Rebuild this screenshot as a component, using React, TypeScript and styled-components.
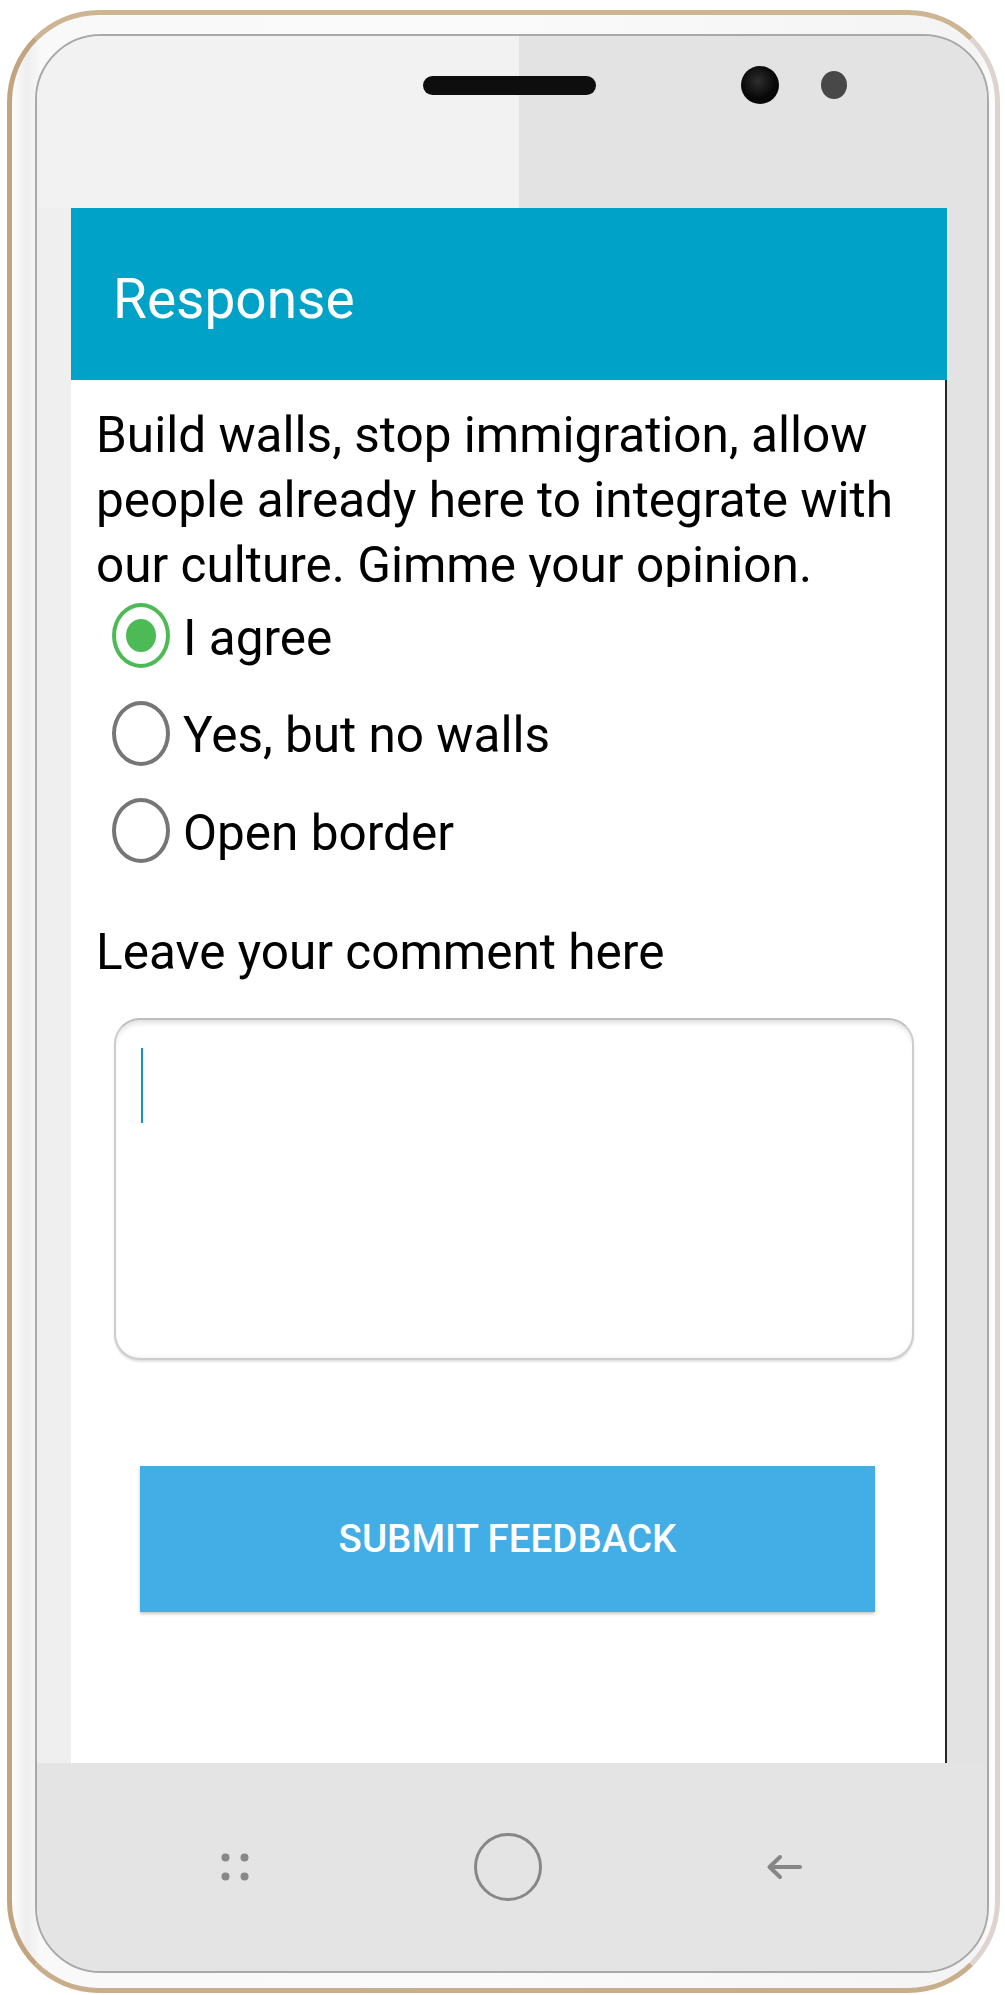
import React from 'react';
import styled, { createGlobalStyle } from 'styled-components';

const GlobalStyle = createGlobalStyle`
  html, body { margin: 0; padding: 0; background: #ffffff; }
  body { font-family: Roboto, "Noto Sans", Arial, sans-serif; }
  * { box-sizing: border-box; }
`;

const Page = styled.div`
  width: 1005px;
  height: 1995px;
  padding: 10px 5px 2px 7px;
  background: #ffffff;
`;

const Phone = styled.div`
  width: 993px;
  height: 1983px;
  border: 5px solid;
  border-color: #cdb493 #ddd3cf #c9ae8b #c2a580;
  border-radius: 92px;
  background: linear-gradient(to right, #fdfdfd, #eeeeee 1.5%, #f9f9f9 3%, #fafafa 50%, #f4f4f4 98%, #fdfdfd);
  padding: 19px 6px 15px 23px;
`;

const Bezel = styled.div`
  width: 100%;
  height: 100%;
  display: flex;
  flex-direction: column;
  border: 2px solid #a9a9a9;
  border-radius: 66px;
  overflow: hidden;
  background: #e4e4e4;
`;

const TopBezel = styled.div`
  height: 172px;
  flex: none;
  display: flex;
  align-items: center;
  padding: 0 0 74px 386px;
  background: linear-gradient(to right, #f2f2f2 0, #f2f2f2 482px, #e3e3e3 482px);
`;

const Speaker = styled.div`
  width: 173px;
  height: 19px;
  border-radius: 10px;
  background: #0e0e0e;
`;

const Camera = styled.div`
  width: 38px;
  height: 38px;
  margin-left: 145px;
  border-radius: 50%;
  background: radial-gradient(circle at 45% 40%, #2e2e2e 0, #080808 55%);
`;

const Sensor = styled.div`
  width: 26px;
  height: 28px;
  margin-left: 42px;
  border-radius: 50%;
  background: #484848;
`;

const MiddleRow = styled.div`
  height: 1555px;
  flex: none;
  display: flex;
`;

const SideStrip = styled.div<{ $light?: boolean }>`
  width: ${(p) => (p.$light ? '34px' : '40px')};
  flex: none;
  background: ${(p) => (p.$light ? '#efefef' : '#e3e3e3')};
`;

const Screen = styled.div`
  width: 876px;
  flex: none;
  display: flex;
  flex-direction: column;
  background: #ffffff;
`;

const Header = styled.div`
  height: 172px;
  flex: none;
  padding: 59px 0 0 42px;
  background: #00a2c7;
`;

const Title = styled.span`
  font-size: 55px;
  line-height: 64px;
  font-weight: 400;
  color: #ffffff;
`;

const Content = styled.div`
  flex: 1;
  display: flex;
  flex-direction: column;
  align-items: flex-start;
  border-right: 2px solid #262626;
`;

const Question = styled.div`
  margin: 23px 0 0 25px;
  height: 184px;
  overflow: hidden;
  font-size: 49.5px;
  line-height: 65px;
  color: #000000;
  white-space: nowrap;
`;

const RadioGroup = styled.div`
  margin-left: 41px;
  display: flex;
  flex-direction: column;
`;

const RadioRow = styled.label`
  height: 97.5px;
  display: flex;
  align-items: center;
  gap: 13px;
`;

const RadioCircle = styled.span<{ $checked?: boolean }>`
  width: 58px;
  height: 65px;
  flex: none;
  border-radius: 50%;
  border: 4px solid ${(p) => (p.$checked ? '#4cba55' : '#767676')};
  display: flex;
  align-items: center;
  justify-content: center;
`;

const RadioDot = styled.span`
  width: 30px;
  height: 33px;
  border-radius: 50%;
  background: #4cba55;
`;

const RadioLabel = styled.span`
  font-size: 49.5px;
  line-height: 58px;
  padding-top: 4px;
  color: #000000;
`;

const CommentLabel = styled.div`
  margin: 40px 0 0 25px;
  font-size: 49.5px;
  line-height: 65px;
  color: #000000;
`;

const CommentBox = styled.div`
  margin: 33px 0 0 43px;
  width: 800px;
  height: 342px;
  flex: none;
  padding: 28px 25px;
  border: 2px solid #cdcdcd;
  border-top-color: #bdbdbd;
  border-radius: 26px;
  background: #ffffff;
  box-shadow: inset 0 6px 6px -4px rgba(0, 0, 0, 0.16), inset 0 -4px 5px -4px rgba(0, 0, 0, 0.08),
    0 2px 2px rgba(0, 0, 0, 0.12);
`;

const Caret = styled.div`
  width: 2px;
  height: 75px;
  background: #0d98ba;
`;

const SubmitButton = styled.button`
  margin: 106px 0 0 69px;
  width: 735px;
  height: 146px;
  flex: none;
  border: none;
  border-radius: 0;
  background: #42aee5;
  color: #ffffff;
  font-family: Roboto, "Noto Sans", Arial, sans-serif;
  font-size: 38.5px;
  font-weight: 500;
  display: flex;
  align-items: center;
  justify-content: center;
  box-shadow: 0 2px 3px rgba(0, 0, 0, 0.22);
`;

const BottomBezel = styled.div`
  flex: 1;
  display: flex;
  align-items: center;
  justify-content: space-between;
  padding: 0 185px 0 184px;
  background: #e4e4e4;
`;

const NavIcon = styled.svg`
  display: block;
  flex: none;
`;

const HomeButton = styled.div`
  width: 68px;
  height: 68px;
  border-radius: 50%;
  border: 3px solid #878787;
`;

const options = [
  { label: 'I agree', checked: true },
  { label: 'Yes, but no walls', checked: false },
  { label: 'Open border', checked: false },
];

export default function App() {
  return (
    <>
      <GlobalStyle />
      <Page>
        <Phone>
          <Bezel>
            <TopBezel>
              <Speaker />
              <Camera />
              <Sensor />
            </TopBezel>
            <MiddleRow>
              <SideStrip $light />
              <Screen>
                <Header>
                  <Title>Response</Title>
                </Header>
                <Content>
                  <Question>
                    Build walls, stop immigration, allow
                    <br />
                    people already here to integrate with
                    <br />
                    our culture. Gimme your opinion.
                  </Question>
                  <RadioGroup>
                    {options.map((o) => (
                      <RadioRow key={o.label}>
                        <RadioCircle $checked={o.checked}>{o.checked && <RadioDot />}</RadioCircle>
                        <RadioLabel>{o.label}</RadioLabel>
                      </RadioRow>
                    ))}
                  </RadioGroup>
                  <CommentLabel>Leave your comment here</CommentLabel>
                  <CommentBox>
                    <Caret />
                  </CommentBox>
                  <SubmitButton>SUBMIT FEEDBACK</SubmitButton>
                </Content>
              </Screen>
              <SideStrip />
            </MiddleRow>
            <BottomBezel>
              <NavIcon width="28" height="28" viewBox="0 0 28 28">
                <circle cx="4.5" cy="4.5" r="4" fill="#888" />
                <circle cx="23.5" cy="4.5" r="4" fill="#888" />
                <circle cx="4.5" cy="23.5" r="4" fill="#888" />
                <circle cx="23.5" cy="23.5" r="4" fill="#888" />
              </NavIcon>
              <HomeButton />
              <NavIcon width="36" height="26" viewBox="0 0 36 26">
                <path
                  d="M34 13 H4 M14 3 L3.5 13 L14 23"
                  fill="none"
                  stroke="#868686"
                  strokeWidth="4"
                  strokeLinecap="round"
                  strokeLinejoin="round"
                />
              </NavIcon>
            </BottomBezel>
          </Bezel>
        </Phone>
      </Page>
    </>
  );
}
